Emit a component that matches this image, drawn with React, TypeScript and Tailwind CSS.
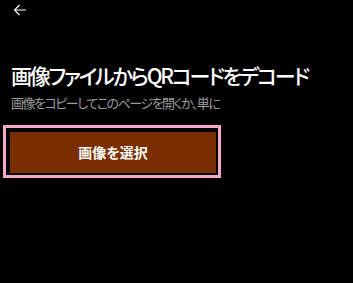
const JP = { fontFamily: '"Noto Sans CJK JP", "Noto Sans", sans-serif', fontFeatureSettings: '"palt"' };

function BackArrow() {
  return (
    <svg width="14" height="12" viewBox="0 0 14 12" fill="none" stroke="white" strokeWidth="1.2">
      <path d="M13 6H1.5M6.5 1L1.5 6l5 5" />
    </svg>
  );
}

export default function App() {
  return (
    <div className="h-[283px] w-[353px] overflow-hidden bg-black text-white" style={JP}>
      <div className="flex h-[20px] items-center pl-[13px]">
        <BackArrow />
      </div>
      <div className="px-[11px] pt-[40px]">
        <h1 className="whitespace-nowrap text-[21px] font-medium leading-[30px] tracking-[-2.2px] text-white">
          画像ファイルからQRコードをデコード
        </h1>
        <p className="mt-[4px] whitespace-nowrap text-[13px] leading-[18px] tracking-[-1.5px] text-[#9b9b9b]">
          画像をコピーしてこのページを開くか、単に
        </p>
      </div>
      <div className="ml-[3px] mt-[13px] w-[218px] border-[3px] border-[#f4aac6] pb-[2px] pl-[4px] pr-[2px] pt-[4px]">
        <button className="flex h-[41px] w-full items-center justify-center bg-[#7b2e00] text-[14px] font-bold text-white">
          画像を選択
        </button>
      </div>
    </div>
  );
}
